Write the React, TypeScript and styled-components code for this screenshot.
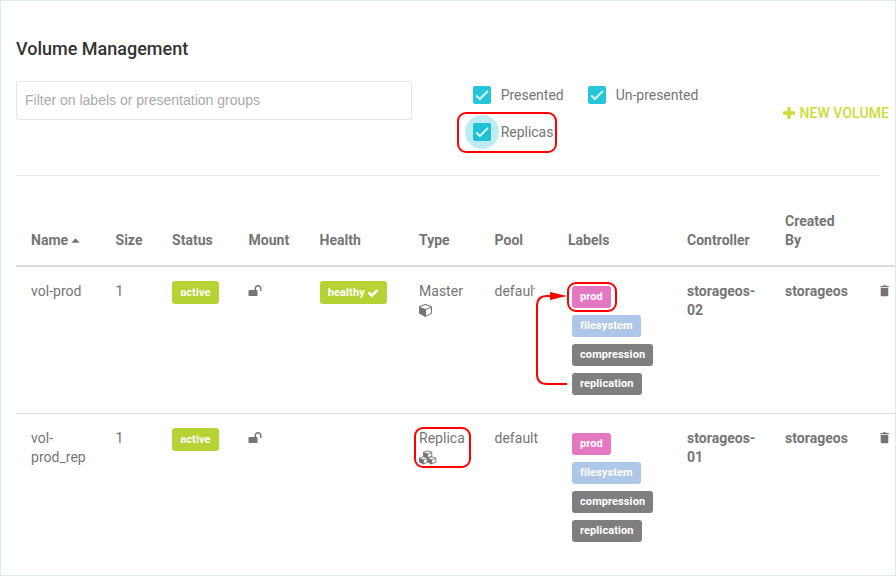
import React from "react";
import styled, { createGlobalStyle, css } from "styled-components";

const GlobalStyle = createGlobalStyle`
  * { box-sizing: border-box; }
  body { margin: 0; background: #fff; overflow: hidden; }
`;

const Frame = styled.main`
  position: relative;
  width: 896px;
  height: 576px;
  padding: 37px 0 0 15px;
  overflow: hidden;
  border: 1px solid #e0ece9;
  background: #fff;
  color: #757575;
  font: 400 14px/19px Roboto, sans-serif;
  letter-spacing: 0.02px;
`;

const Title = styled.h1`
  margin: 0;
  height: 43px;
  color: #333;
  font-size: 18px;
  font-weight: 500;
  line-height: 22px;
  letter-spacing: 0;
`;

const Toolbar = styled.header`
  display: flex;
  width: 864px;
  height: 95px;
  border-bottom: 1px solid #ebebeb;
`;

const FilterInput = styled.input`
  width: 396px;
  height: 39px;
  padding: 0 8px 2px;
  border: 1px solid #e6e6e6;
  border-radius: 2px;
  outline: none;
  background: #fff;
  font: 14px "Liberation Sans", Arial, sans-serif;
  &::placeholder { color: #aaa; opacity: 1; }
`;

const Filters = styled.div`
  display: grid;
  grid-template-columns: 115px 150px;
  grid-template-rows: 37px 37px;
  width: 265px;
  margin: -4px 0 0 61px;
  letter-spacing: -0.02px;
`;

const Option = styled.label`
  display: flex;
  align-items: center;
  gap: 9.7px;
  white-space: nowrap;
`;

const CheckBox = styled.span<{ $focused?: boolean }>`
  display: grid;
  place-items: center;
  width: 18px;
  height: 18px;
  margin-bottom: 1px;
  border-radius: 2px;
  background: #26c6da;
  ${(p) => p.$focused && css`
    position: relative;
    z-index: 0;
    &::before { content: ""; position: absolute; inset: -8px; z-index: -2; border-radius: 50%; background: #beecf3; }
    &::after { content: ""; position: absolute; inset: 0; z-index: -1; border-radius: 2px; background: #1fc1d7; }
  `}
`;

const NewVolume = styled.button`
  display: flex;
  align-items: center;
  gap: 4px;
  align-self: flex-start;
  height: 20px;
  margin: 22px -12px 0 45.4px;
  padding: 0;
  border: 0;
  background: none;
  color: #cddc39;
  font: 500 14px/20px Roboto, sans-serif;
  letter-spacing: 0.08px;
  white-space: nowrap;
`;

const Table = styled.section`
  width: 880px;
  padding-top: 21px;
`;

const columns = css`
  display: grid;
  grid-template-columns: 84.5px 56.5px 76.5px 71px 99.5px 75.5px 73.5px 119px 98px 95.5px 45px;
  padding-left: 15px;
`;

const HeadRow = styled.div`
  ${columns}
  align-items: end;
  height: 70px;
  padding-bottom: 15px;
  border-bottom: 2px solid #dcdcdc;
  font-weight: 700;
`;

const Row = styled.div`
  ${columns}
  height: 147px;
  padding-top: 15px;
  border-bottom: 1px solid #dcdcdc;
  &:last-child { border-bottom: 0; }
`;

const Cell = styled.div<{ $bold?: boolean; $width?: number }>`
  width: ${(p) => (p.$width ? `${p.$width}px` : "auto")};
  font-weight: ${(p) => (p.$bold ? 700 : 400)};
`;

const Glyph = styled.svg`
  display: block;
  flex: none;
  fill: currentColor;
`;

const SortArrow = styled(Glyph)`
  display: inline-block;
  margin-left: 3px;
  vertical-align: 2px;
`;

const LockIcon = styled(Glyph)`
  margin: 2px 0 0 -0.7px;
`;

const TypeIcon = styled(Glyph)`
  margin-top: 2px;
`;

const TrashIcon = styled(Glyph)`
  margin: 3px 0 0 -0.6px;
`;

const Badge = styled.span<{ $color: string; $tall?: boolean }>`
  display: inline-flex;
  align-items: center;
  gap: 3px;
  height: ${(p) => (p.$tall ? 23 : 22)}px;
  margin-top: ${(p) => (p.$tall ? -1 : 0)}px;
  padding: 0 ${(p) => (p.$tall ? 8.3 : 8)}px;
  border-radius: 3px;
  background: ${(p) => p.$color};
  color: #fff;
  font-size: 11px;
  font-weight: 700;
  line-height: 22px;
  letter-spacing: 0.1px;
  vertical-align: top;
`;

const CheckMark = styled(Glyph)`
  margin: 0 -0.8px;
`;

const Labels = styled.div`
  display: flex;
  flex-direction: column;
  align-items: flex-start;
  gap: 7px;
  padding: 4px 0 0 4px;
`;

const Annotations = styled.svg`
  position: absolute;
  top: -1px;
  left: -1px;
  pointer-events: none;
`;

const Check = () => (
  <svg width="18" height="18" viewBox="0 0 18 18" fill="none">
    <path d="M3.2 9.400 6.900 13 15 4.900" stroke="#e0f6f9" strokeWidth="2" />
  </svg>
);

const Lock = () => (
  <LockIcon width="14" height="14" viewBox="0 0 1792 1792">
    <path d="M1728 576v256q0 26-19 45t-45 19h-64q-26 0-45-19t-19-45v-256q0-106-75-181t-181-75-181 75-75 181v192h96q40 0 68 28t28 68v576q0 40-28 68t-68 28h-960q-40 0-68-28t-28-68v-576q0-40 28-68t68-28h672v-192q0-185 131.500-316.500t316.500-131.500 316.500 131.500 131.500 316.500z" />
  </LockIcon>
);

const Trash = () => (
  <TrashIcon width="9" height="12" viewBox="0 0 9 12">
    <path d="M.7 3h7.600v7.200q0 1-1 1h-5.600q-1 0-1-1zM.3 1h2.300l.6-.7h2.600l.6.7h2.300v1.200H.3z" />
  </TrashIcon>
);

const cubePath =
  "M896 1629l640-349v-636l-640 233v752zm-64-865l698-254-698-254-698 254zm832-252v768q0 35-18 65t-49 47l-704 384q-28 16-61 16t-61-16l-704-384q-31-17-49-47t-18-65v-768q0-40 23-73t61-47l704-256q22-8 44-8t44 8l704 256q38 14 61 47t23 73z";

const Cube = () => (
  <TypeIcon width="14" height="15" viewBox="0 0 14 15">
    <path transform="scale(.0078)" d={cubePath} />
  </TypeIcon>
);

const Cubes = () => (
  <TypeIcon width="18" height="15" viewBox="0 0 18 15">
    {[[4.1, 0], [0, 5.8], [8.2, 5.8]].map(([x, y]) => (
      <path key={x} transform={`translate(${x} ${y}) scale(.0054 .0047)`} stroke="currentColor" strokeWidth="50" d={cubePath} />
    ))}
  </TypeIcon>
);

const labelTags = [
  ["prod", "#e377c2"],
  ["filesystem", "#aec7e8"],
  ["compression", "#7f7f7f"],
  ["replication", "#7f7f7f"],
];

const volumes = [
  { name: "vol-prod", healthy: true, type: "Master", controller: "storageos-02" },
  { name: "vol-prod_rep", healthy: false, type: "Replica", controller: "storageos-01" },
];

export default function App() {
  return (
    <>
      <GlobalStyle />
      <Frame>
        <Title>Volume Management</Title>
        <Toolbar>
          <FilterInput placeholder="Filter on labels or presentation groups" />
          <Filters>
            <Option><CheckBox><Check /></CheckBox>Presented</Option>
            <Option><CheckBox><Check /></CheckBox>Un-presented</Option>
            <Option><CheckBox $focused><Check /></CheckBox>Replicas</Option>
          </Filters>
          <NewVolume>
            <Glyph width="12" height="12" viewBox="190 128 1410 1410">
              <path d="M1600 736v192q0 40-28 68t-68 28h-416v416q0 40-28 68t-68 28h-192q-40 0-68-28t-28-68v-416h-416q-40 0-68-28t-28-68v-192q0-40 28-68t68-28h416v-416q0-40 28-68t68-28h192q40 0 68 28t28 68v416h416q40 0 68 28t28 68z" />
            </Glyph>
            NEW VOLUME
          </NewVolume>
        </Toolbar>
        <Table>
          <HeadRow>
            <span>Name<SortArrow width="9" height="5" viewBox="0 0 9 5"><path d="M.3 4.700 4.500.3 8.700 4.700z" /></SortArrow></span>
            <span>Size</span>
            <span>Status</span>
            <span>Mount</span>
            <span>Health</span>
            <span>Type</span>
            <span>Pool</span>
            <span>Labels</span>
            <span>Controller</span>
            <span>Created<br />By</span>
          </HeadRow>
          {volumes.map((v) => (
            <Row key={v.name}>
              <Cell $width={60}>{v.name}</Cell>
              <Cell>1</Cell>
              <Cell><Badge $tall $color="#b5d334">active</Badge></Cell>
              <Cell><Lock /></Cell>
              <Cell>
                {v.healthy && (
                  <Badge $tall $color="#b5d334">
                    healthy
                    <CheckMark width="12" height="12" viewBox="0 0 1792 1792">
                      <path d="M1671 566q0 40-28 68l-724 724-136 136q-28 28-68 28t-68-28l-136-136-362-362q-28-28-28-68t28-68l136-136q28-28 68-28t68 28l294 295 656-657q28-28 68-28t68 28l136 136q28 28 28 68z" />
                    </CheckMark>
                  </Badge>
                )}
              </Cell>
              <Cell>{v.type}{v.type === "Master" ? <Cube /> : <Cubes />}</Cell>
              <Cell>default</Cell>
              <Labels>
                {labelTags.map(([text, color]) => <Badge key={text} $color={color}>{text}</Badge>)}
              </Labels>
              <Cell $bold $width={72}>{v.controller}</Cell>
              <Cell $bold>storageos</Cell>
              <Cell><Trash /></Cell>
            </Row>
          ))}
        </Table>
        <Annotations width="896" height="576" viewBox="0 0 896 576" fill="none" stroke="#f00" strokeWidth="2">
          <path d="M535 283h12v14h-12zM533 290h4v9h-4z" fill="#fff" stroke="none" />
          <rect x="458" y="113" width="98" height="39" rx="8" />
          <rect x="568" y="283" width="48" height="28" rx="8" />
          <rect x="415" y="428" width="55" height="39" rx="8" />
          <path d="M567 384H547q-10 0-10-10V306q0-10 10-10h5" />
          <path d="M550 292 567 296 550 300z" fill="#f00" stroke="none" />
        </Annotations>
      </Frame>
    </>
  );
}
